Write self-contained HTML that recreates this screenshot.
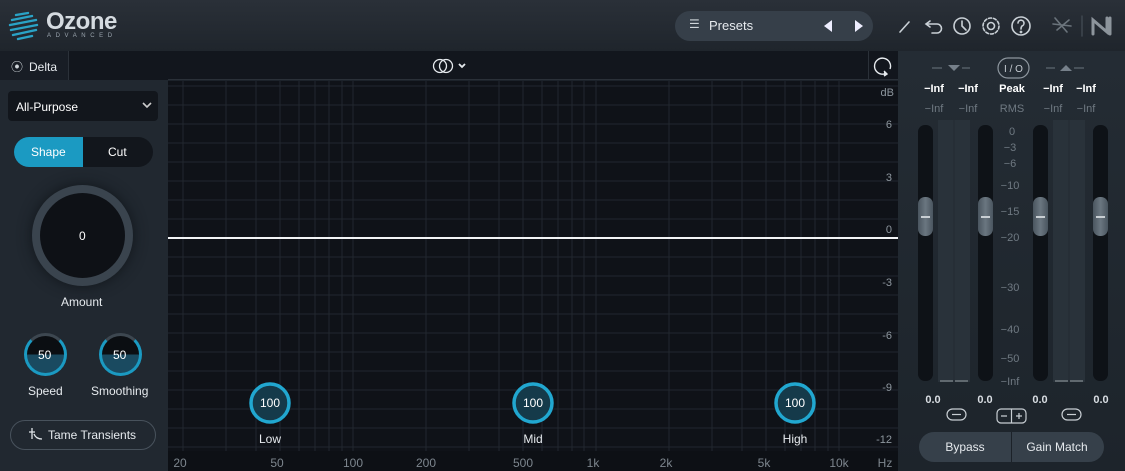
<!DOCTYPE html>
<html><head><meta charset="utf-8"><style>
*{box-sizing:border-box;margin:0;padding:0}
body{width:1125px;height:471px;overflow:hidden;background:#1c222a;font-family:"Liberation Sans",sans-serif;color:#fff;position:relative}
.a{position:absolute}
.t{position:absolute;white-space:nowrap}
</style></head><body>
<!-- header -->
<div class="a" style="left:0;top:0;width:1125px;height:51px;background:linear-gradient(#2a3038,#1f252c)"></div>
<svg class="a" style="left:8px;top:10px" width="32" height="32" viewBox="0 0 32 32">
<g stroke="#2aa3c6" stroke-width="2.4" fill="none" stroke-linecap="round">
<path d="M8 5 L20 3"/><path d="M4 10 L24 6"/><path d="M2 15 L28 10"/><path d="M3 20 L29 15"/><path d="M5 25 L28 20"/><path d="M10 29 L24 26"/>
</g></svg>
<div class="t" style="left:46px;top:8px;font-size:24px;font-weight:bold;color:#d5dbe0;letter-spacing:-0.5px">Ozone</div>
<div class="t" style="left:47px;top:33px;font-size:6px;color:#9aa4ad;letter-spacing:4.6px">ADVANCED</div>
<div class="a" style="left:675px;top:11px;width:198px;height:30px;border-radius:15px;background:#363f49"></div>
<div class="t" style="left:689px;top:17px;font-size:12px;color:#cfd5da">☰</div>
<div class="t" style="left:709px;top:18px;font-size:13px;color:#e6eaee">Presets</div>
<svg class="a" style="left:822px;top:18px" width="46" height="16"><path d="M10 2 L2 8 L10 14Z" fill="#eef"/><path d="M33 2 L41 8 L33 14Z" fill="#eef"/></svg>
<svg class="a" style="left:895px;top:12px" width="230" height="30" viewBox="0 0 230 30" fill="none" stroke="#c9d0d6" stroke-width="1.6" stroke-linecap="round">
<path d="M5 20 L14 10"/>
<path d="M35 9 L31 12 L35 15 M31 12 H42 a4 4 0 0 1 0 9 H37"/>
<circle cx="67" cy="14" r="8"/><path d="M67 9 V14 L71 18"/>
<circle cx="96" cy="14" r="3.5"/><circle cx="96" cy="14" r="8" stroke-dasharray="3 2"/>
<circle cx="126" cy="14" r="9"/><path d="M123 11 a3 3 0 1 1 4 3 q-1 1-1 3"/><circle cx="126" cy="20" r="0.6"/>
<path d="M160 6 L172 20 M162 18 L174 8 M158 12 L176 14" stroke="#6b747c"/>
<path d="M187 4 V24" stroke="#3d454d"/>
<path d="M198 22 V8 L212 20 V6 M215 6 V22" stroke="#8d959c" stroke-width="3"/>
</svg>
<!-- left panel -->
<div class="a" style="left:0;top:51px;width:168px;height:420px;background:#212830"></div>
<div class="a" style="left:0;top:51px;width:1125px;height:29px;background:#12161d"></div>
<div class="a" style="left:0;top:51px;width:69px;height:29px;background:#181d25;border-right:1px solid #2b3139"></div>
<div class="t" style="left:11px;top:58px;font-size:12px;color:#d0d6db">⦿</div>
<div class="t" style="left:29px;top:60px;font-size:12px;color:#e6eaee">Delta</div>
<div class="a" style="left:8px;top:91px;width:150px;height:30px;border-radius:4px;background:#12161c"></div>
<div class="t" style="left:16px;top:100px;font-size:12px;color:#fff">All-Purpose</div>
<svg class="a" style="left:142px;top:102px" width="10" height="7"><path d="M1 1 L5 5 L9 1" stroke="#ccc" stroke-width="1.6" fill="none"/></svg>
<div class="a" style="left:14px;top:137px;width:139px;height:30px;border-radius:15px;background:#12161c"></div>
<div class="a" style="left:14px;top:137px;width:69px;height:30px;border-radius:15px 0 0 15px;background:#1b9ac2"></div>
<div class="t" style="left:31px;top:145px;font-size:12px;color:#fff">Shape</div>
<div class="t" style="left:108px;top:145px;font-size:12px;color:#fff">Cut</div>
<div class="a" style="left:32px;top:185px;width:101px;height:101px;border-radius:50%;background:#3a444e;box-shadow:0 0 14px #11161b"></div>
<div class="a" style="left:40px;top:193px;width:85px;height:85px;border-radius:50%;background:#0e1116"></div>
<div class="t" style="left:79px;top:229px;font-size:12px;color:#fff">0</div>
<div class="t" style="left:61px;top:295px;font-size:12px;color:#e6eaee">Amount</div>
<div class="a" style="left:24px;top:333px;width:43px;height:43px;border-radius:50%;background:linear-gradient(#0b0e12 50%,#1a4a60 50%);border:3px solid;border-color:#3d4750 #1b9ac2 #1b9ac2 #1b9ac2"></div>
<div class="t" style="left:38px;top:348px;font-size:12px;color:#fff">50</div>
<div class="a" style="left:99px;top:333px;width:43px;height:43px;border-radius:50%;background:linear-gradient(#0b0e12 50%,#1a4a60 50%);border:3px solid;border-color:#3d4750 #1b9ac2 #1b9ac2 #1b9ac2"></div>
<div class="t" style="left:113px;top:348px;font-size:12px;color:#fff">50</div>
<div class="t" style="left:28px;top:384px;font-size:12px;color:#e6eaee">Speed</div>
<div class="t" style="left:91px;top:384px;font-size:12px;color:#e6eaee">Smoothing</div>
<div class="a" style="left:10px;top:420px;width:146px;height:30px;border-radius:15px;border:1px solid #48525c"></div>
<svg class="a" style="left:28px;top:426px" width="16" height="16" fill="none" stroke="#dfe4e8" stroke-width="1.3"><path d="M4 2 V6 M1 6 H7 M4 6 V13 M6 8 Q8 13 14 13"/></svg>
<div class="t" style="left:48px;top:428px;font-size:12px;color:#e6eaee">Tame Transients</div>
<!-- graph -->
<div class="a" style="left:168px;top:51px;width:730px;height:29px;background:#12161d;border-bottom:1px solid #2a3038"></div>
<svg class="a" style="left:432px;top:58px" width="38" height="16" fill="none" stroke="#e6eaee" stroke-width="1.3"><circle cx="8" cy="8" r="6.5"/><circle cx="14" cy="8" r="6.5"/><path d="M27 6 L30 9 L33 6" stroke-width="1.8"/></svg>
<div class="a" style="left:868px;top:51px;width:1px;height:29px;background:#2b3139"></div>
<svg class="a" style="left:872px;top:55px" width="22" height="22" fill="none" stroke="#e6eaee" stroke-width="1.4"><path d="M12 19 A8 8 0 1 1 18 14"/><path d="M12 16 L15 19 L12 21" fill="#e6eaee"/></svg>
<svg class="a" style="left:168px;top:81px" width="730" height="390">
<rect width="730" height="390" fill="#0f1218"/>
<g stroke="#22272f" stroke-width="1">
<path d="M15 0V370M58 0V370M88 0V370M112 0V370M131 0V370M147 0V370M161 0V370M174 0V370M185 0V370M258 0V370M301 0V370M331 0V370M355 0V370M374 0V370M390 0V370M404 0V370M416 0V370M428 0V370M501 0V370M544 0V370M574 0V370M598 0V370M617 0V370M633 0V370M647 0V370M660 0V370M671 0V370"/>
<path d="M0 5H730M0 24H730M0 43H730M0 62H730M0 81H730M0 100H730M0 119H730M0 138H730M0 176H730M0 195H730M0 214H730M0 233H730M0 252H730M0 271H730M0 290H730M0 309H730M0 328H730M0 347H730M0 366H730"/>
</g>
<rect y="370" width="730" height="20" fill="#0d1015"/>
<line x1="0" y1="157" x2="730" y2="157" stroke="#f2f4f6" stroke-width="2"/>
<g fill="#8e979f" font-size="11" font-family="Liberation Sans" text-anchor="end">
<text x="726" y="15">dB</text><text x="724" y="47">6</text><text x="724" y="100">3</text><text x="724" y="152">0</text><text x="724" y="205">-3</text><text x="724" y="258">-6</text><text x="724" y="310">-9</text><text x="724" y="362">-12</text>
</g>
<g fill="#7d868e" font-size="12" font-family="Liberation Sans" text-anchor="middle">
<text x="12" y="386">20</text><text x="109" y="386">50</text><text x="185" y="386">100</text><text x="258" y="386">200</text><text x="355" y="386">500</text><text x="425" y="386">1k</text><text x="498" y="386">2k</text><text x="596" y="386">5k</text><text x="671" y="386">10k</text><text x="717" y="386">Hz</text>
</g>
<g font-family="Liberation Sans" font-size="12" text-anchor="middle">
<circle cx="102" cy="322" r="19" fill="#153a4a" stroke="#21a7d0" stroke-width="3.5"/><text x="102" y="326" fill="#fff">100</text><text x="102" y="362" fill="#e6eaee">Low</text>
<circle cx="365" cy="322" r="19" fill="#153a4a" stroke="#21a7d0" stroke-width="3.5"/><text x="365" y="326" fill="#fff">100</text><text x="365" y="362" fill="#e6eaee">Mid</text>
<circle cx="627" cy="322" r="19" fill="#153a4a" stroke="#21a7d0" stroke-width="3.5"/><text x="627" y="326" fill="#fff">100</text><text x="627" y="362" fill="#e6eaee">High</text>
</g>
</svg>
<!-- right panel -->
<div class="a" style="left:898px;top:51px;width:227px;height:420px;background:linear-gradient(#242c34,#1d242b)"></div>
<svg class="a" style="left:898px;top:51px" width="227" height="420" font-family="Liberation Sans">
<g stroke="#5d6770" stroke-width="1.2"><path d="M34 17H44M64 17H72M148 17H157M176 17H186"/></g>
<path d="M50 14H62L56 20Z" fill="#76808a"/><path d="M162 20H174L168 14Z" fill="#76808a"/>
<rect x="100" y="7" width="31" height="20" rx="10" fill="none" stroke="#8d969e" stroke-width="1.2"/>
<text x="115.5" y="21" font-size="10" fill="#c6ccd2" text-anchor="middle">I / O</text>
<g font-size="11" font-weight="bold" fill="#fff" text-anchor="middle"><text x="36" y="41">−Inf</text><text x="70" y="41">−Inf</text><text x="114" y="41">Peak</text><text x="155" y="41">−Inf</text><text x="188" y="41">−Inf</text></g>
<g font-size="11" fill="#6f7982" text-anchor="middle"><text x="36" y="61">−Inf</text><text x="70" y="61">−Inf</text><text x="114" y="61">RMS</text><text x="155" y="61">−Inf</text><text x="188" y="61">−Inf</text></g>
<rect x="40" y="69" width="32" height="262" fill="#29323a"/><line x1="56" y1="69" x2="56" y2="331" stroke="#222a31"/>
<rect x="155" y="69" width="32" height="262" fill="#29323a"/><line x1="171" y1="69" x2="171" y2="331" stroke="#222a31"/>
<g fill="#60696f"><rect x="42" y="329" width="13" height="2"/><rect x="57" y="329" width="13" height="2"/><rect x="157" y="329" width="13" height="2"/><rect x="172" y="329" width="13" height="2"/></g>
<g fill="#0e1217"><rect x="20" y="74" width="15" height="256" rx="7"/><rect x="80" y="74" width="15" height="256" rx="7"/><rect x="135" y="74" width="15" height="256" rx="7"/><rect x="195" y="74" width="15" height="256" rx="7"/></g>
<defs><linearGradient id="g" x1="0" y1="0" x2="1" y2="0"><stop offset="0" stop-color="#4a555f"/><stop offset=".5" stop-color="#6a7680"/><stop offset="1" stop-color="#4a555f"/></linearGradient></defs>
<g fill="url(#g)"><rect x="20" y="146" width="15" height="39" rx="7"/><rect x="80" y="146" width="15" height="39" rx="7"/><rect x="135" y="146" width="15" height="39" rx="7"/><rect x="195" y="146" width="15" height="39" rx="7"/></g>
<g fill="#c8ced3"><rect x="23" y="165" width="9" height="2"/><rect x="83" y="165" width="9" height="2"/><rect x="138" y="165" width="9" height="2"/><rect x="198" y="165" width="9" height="2"/></g>
<g font-size="11" fill="#6f7982" text-anchor="middle">
<text x="114" y="84">0</text><text x="112" y="100">−3</text><text x="112" y="116">−6</text><text x="112" y="138">−10</text><text x="112" y="164">−15</text><text x="112" y="190">−20</text><text x="112" y="240">−30</text><text x="112" y="282">−40</text><text x="112" y="311">−50</text><text x="112" y="334">−Inf</text>
</g>
<g font-size="11" fill="#d8dde2" text-anchor="middle" font-weight="bold"><text x="35" y="352">0.0</text><text x="87" y="352">0.0</text><text x="142" y="352">0.0</text><text x="203" y="352">0.0</text></g>
<g fill="none" stroke="#c8ced3" stroke-width="1.2">
<rect x="49" y="358" width="19" height="11" rx="5.5"/><path d="M54 363.5H63"/>
<rect x="164" y="358" width="19" height="11" rx="5.5"/><path d="M169 363.5H178"/>
<rect x="99" y="358" width="29" height="14" rx="4"/><path d="M113.5 358V372M103 365H109M118 365H124M121 362V368"/>
</g>
<rect x="21" y="381" width="185" height="30" rx="15" fill="#36404a"/>
<line x1="113.5" y1="381" x2="113.5" y2="411" stroke="#1c2229"/>
<text x="67" y="400" font-size="12" fill="#e6eaee" text-anchor="middle">Bypass</text>
<text x="159" y="400" font-size="12" fill="#e6eaee" text-anchor="middle">Gain Match</text>
</svg>
</body></html>
